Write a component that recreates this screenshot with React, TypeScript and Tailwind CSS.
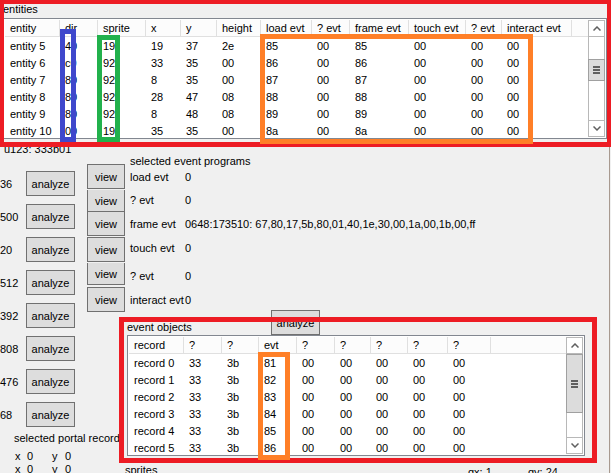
import React from "react";

const entityColumns = [
  { label: "entity", width: "w-[55px]" },
  { label: "dir", width: "w-[38px]" },
  { label: "sprite", width: "w-[48px]" },
  { label: "x", width: "w-[35px]" },
  { label: "y", width: "w-[36px]" },
  { label: "height", width: "w-[44px]" },
  { label: "load evt", width: "w-[51px]" },
  { label: "? evt", width: "w-[38px]" },
  { label: "frame evt", width: "w-[59px]" },
  { label: "touch evt", width: "w-[57px]" },
  { label: "? evt", width: "w-[36px]" },
  { label: "interact evt", width: "w-[70px]" },
];

const entityRows = [
  ["entity 5", "40", "19", "19", "37", "2e", "85", "00", "85", "00", "00", "00"],
  ["entity 6", "c0", "92", "33", "35", "00", "86", "00", "86", "00", "00", "00"],
  ["entity 7", "80", "92", "8", "35", "00", "87", "00", "87", "00", "00", "00"],
  ["entity 8", "80", "92", "28", "47", "08", "88", "00", "88", "00", "00", "00"],
  ["entity 9", "80", "92", "8", "48", "08", "89", "00", "89", "00", "00", "00"],
  ["entity 10", "00", "19", "35", "35", "00", "8a", "00", "8a", "00", "00", "00"],
];

const recordColumns = [
  { label: "record", width: "w-[55px]" },
  { label: "?", width: "w-[38px]" },
  { label: "?", width: "w-[37px]" },
  { label: "evt", width: "w-[38px]" },
  { label: "?", width: "w-[38px]" },
  { label: "?", width: "w-[36px]" },
  { label: "?", width: "w-[37px]" },
  { label: "?", width: "w-[40px]" },
  { label: "?", width: "w-[43px]" },
];

const recordRows = ["81", "82", "83", "84", "85", "86"].map((evt, i) => [
  `record ${i}`, "33", "3b", evt, "00", "00", "00", "00", "00",
]);

const portals = ["36", "500", "20", "512", "392", "808", "476", "68"];

const viewButtons = [
  "h-[25px]",
  "mt-px h-[22px] border-t-0",
  "h-6 border-t-0",
  "mt-px h-[25px]",
  "mt-px h-[22px] border-t-0",
  "mt-0.5 h-[25px]",
];

const programs = [
  { label: "load evt", value: "0", height: "h-4" },
  { label: "? evt", value: "0", height: "h-[30px]" },
  { label: "frame evt", value: "0648:173510: 67,80,17,5b,80,01,40,1e,30,00,1a,00,1b,00,ff", height: "h-[18px]" },
  { label: "touch evt", value: "0", height: "h-[30px]" },
  { label: "? evt", value: "0", height: "h-[26px]" },
  { label: "interact evt", value: "0", height: "h-[22px]" },
];

type Column = { label: string; width: string };

function ScrollBar({ before, thumb }: { before: string; thumb: string }) {
  return (
    <div className="flex w-[17px] shrink-0 flex-col border border-[#b8b8b8] bg-white">
      <button aria-label="Scroll up" className="flex h-4 shrink-0 items-center justify-center border-b border-[#b8b8b8]">
        <svg width="8" height="5" viewBox="0 0 8 5" fill="none" stroke="#606060" strokeWidth="1.5">
          <path d="M0.5 4.5 4 1 7.5 4.5" />
        </svg>
      </button>
      <div className={`${before} shrink-0`} />
      <div className={`${thumb} -mx-px flex shrink-0 flex-col items-center justify-center gap-px border border-[#a0a0a0] bg-[#dcdcdc]`}>
        <span className="h-0.5 w-[7px] bg-[#606060]" />
        <span className="h-0.5 w-[7px] bg-[#606060]" />
        <span className="h-0.5 w-[7px] bg-[#606060]" />
      </div>
      <button aria-label="Scroll down" className="mt-auto flex h-4 shrink-0 items-center justify-center border-t border-[#b8b8b8]">
        <svg width="8" height="5" viewBox="0 0 8 5" fill="none" stroke="#606060" strokeWidth="1.5">
          <path d="M0.5 0.5 4 4 7.5 0.5" />
        </svg>
      </button>
    </div>
  );
}

function ListView({ label, columns, rows, before, thumb }: { label: string; columns: Column[]; rows: string[][]; before: string; thumb: string }) {
  return (
    <div className="flex h-[121px] border border-[#828790] bg-white p-px">
      <div className="relative min-w-0 flex-1 overflow-hidden">
        <div className="absolute inset-x-0 top-0 h-[17px] border-b border-[#e0e0e0] bg-[#fcfcfc]" />
        <table aria-label={label} className="relative table-fixed border-separate border-spacing-0 text-left">
          <thead>
            <tr>
              {columns.map((c, i) => (
                <th key={i} className={`${c.width} h-[17px] whitespace-nowrap border-r border-b border-[#e0e0e0] p-0 pl-[5px] font-normal leading-4`}>
                  {c.label}
                </th>
              ))}
            </tr>
          </thead>
          <tbody>
            {rows.map((r) => (
              <tr key={r[0]}>
                {r.map((v, i) => (
                  <td key={i} className="h-[17px] whitespace-nowrap p-0 pl-[5px] leading-4">{v}</td>
                ))}
              </tr>
            ))}
          </tbody>
        </table>
      </div>
      <ScrollBar before={before} thumb={thumb} />
    </div>
  );
}

const button = "border border-[#707070] bg-[#dddddd]";

export default function App() {
  return (
    <div className="relative flex h-screen flex-col overflow-hidden bg-[#f0f0f0] font-['Liberation_Sans',Arial,sans-serif] text-[11px] leading-4 text-black">
      <section className="relative z-10 h-[147px] shrink-0 px-[3px] pr-1">
        <h2 className="h-[18px] pt-px">entities</h2>
        <ListView label="entities" columns={entityColumns} rows={entityRows} before="h-[22px]" thumb="h-[22px]" />
        <div className="pointer-events-none absolute inset-0 border-4 border-b-[5px] border-[#ed1c24]" />
        <div className="pointer-events-none absolute left-[60px] top-[29px] h-[113px] w-4 border-[5px] border-[#3f48cc]" />
        <div className="pointer-events-none absolute left-[97px] top-[35px] h-[107px] w-[23px] border-[5px] border-[#22b14c]" />
        <div className="pointer-events-none absolute left-[260px] top-[34px] h-[110px] w-[273px] border-[5px] border-[#ff7f27]" />
      </section>

      <main className="mr-px flex min-h-0 flex-1 border-r border-[#a89a90]">
        <div className="flex w-[87px] shrink-0 flex-col">
          <p className="-mt-1.5 h-[30px] shrink-0 pl-1">u123: 333b01</p>
          <ul className="flex shrink-0 flex-col gap-2">
            {portals.map((p) => (
              <li key={p} className="flex h-[25px] items-center">
                <span className="w-[26px]">{p}</span>
                <button className={`${button} h-[25px] w-[49px]`}>analyze</button>
              </li>
            ))}
          </ul>
          <h2 className="mt-[3px] shrink-0 whitespace-nowrap pl-[14px]">selected portal record</h2>
          <div className="mt-1 grid shrink-0 grid-cols-[12px_25px_13px_10px] pl-[15px] leading-[13px]">
            <span>x</span><span>0</span><span>y</span><span>0</span>
            <span>x</span><span>0</span><span>y</span><span>0</span>
          </div>
        </div>

        <div className="flex min-w-0 flex-1 flex-col">
          <div className="flex h-[170px] shrink-0">
            <div className="mt-[17px] flex w-[38px] flex-col">
              {viewButtons.map((size, i) => (
                <button key={i} className={`${button} ${size} shrink-0`}>view</button>
              ))}
            </div>
            <div className="pl-[5px] pt-1.5">
              <h2 className="h-4">selected event programs</h2>
              <dl>
                {programs.map((p, i) => (
                  <div key={i} className={`${p.height} flex items-center whitespace-nowrap`}>
                    <dt className="w-[55px]">{p.label}</dt>
                    <dd>{p.value}</dd>
                  </div>
                ))}
              </dl>
            </div>
          </div>

          <section className="relative ml-8 mr-3 h-[146px] shrink-0 pl-2 pr-3">
            <h2 className="h-[18px] pt-0.5">event objects</h2>
            <ListView label="event objects" columns={recordColumns} rows={recordRows} before="h-0" thumb="h-[59px]" />
            <button className={`${button} absolute -top-[7px] left-[152px] h-[25px] w-[49px]`}>analyze</button>
            <div className="pointer-events-none absolute inset-0 border-[5px] border-[#ed1c24]" />
            <div className="pointer-events-none absolute left-[139px] top-[35px] h-[108px] w-8 border-[5px] border-[#ff7f27]" />
          </section>

          <div className="flex pl-[38px] leading-[14px]">
            <h2 className="flex-1">sprites</h2>
            <span className="w-[60px] pt-0.5">gx: 1</span>
            <span className="w-[81px] pt-0.5">gy: 24</span>
          </div>
        </div>
      </main>
    </div>
  );
}
